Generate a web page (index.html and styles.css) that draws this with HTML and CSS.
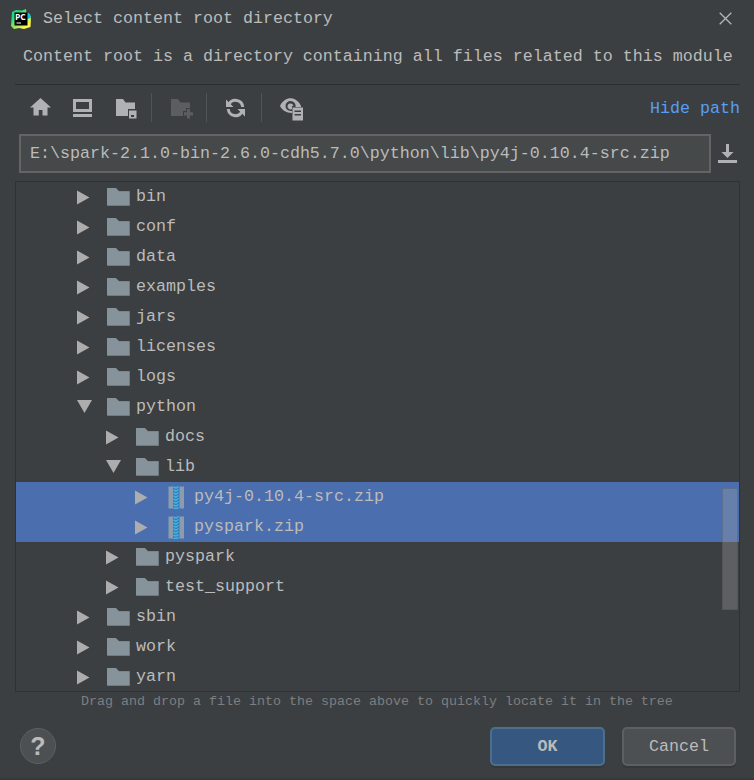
FILE: index.html
```
<!DOCTYPE html>
<html lang="en">
<head>
<meta charset="utf-8">
<title>Select content root directory</title>
<link rel="stylesheet" href="styles.css">
</head>
<body>
<svg class="defs" width="0" height="0">
  <defs>
    <linearGradient id="pc" x1="0" y1="0" x2="1" y2="1"><stop offset="0.25" stop-color="#21d789"/><stop offset="0.6" stop-color="#b5ea50"/><stop offset="0.8" stop-color="#fcf84a"/></linearGradient>
    <symbol id="folder" viewBox="0 0 23 18"><path d="M0.5 0.5H9L12 3.5H22.5V17.5H0.5Z" fill="#87939a" stroke="#6f7a81" stroke-width="1"/><path d="M0 0H8.7L11.7 3.5H22V17H0Z" fill="#87939a"/></symbol>
    <symbol id="right" viewBox="0 0 13 15"><path d="M0 0.5L12.5 7.5L0 14.5Z" fill="#adadad"/></symbol>
    <symbol id="down" viewBox="0 0 15 13"><path d="M0 0H15L7.5 13Z" fill="#adadad"/></symbol>
    <symbol id="zip" viewBox="0 0 17 23"><path d="M0.5 0.5H5V22.5H0.5ZM11.5 0.5H16V22.5H11.5Z" fill="#8d9cad"/><path d="M5 0H11V23H5Z" fill="#3b78b8"/><path d="M5.5 1L8 2.2L10.5 0.5M5.5 4L8 5.2L10.5 3.5M5.5 7L8 8.2L10.5 6.5M5.5 10L8 11.2L10.5 9.5M5.5 13L8 14.2L10.5 12.5M5.5 16L8 17.2L10.5 15.5M5.5 19L8 20.2L10.5 18.5M5.5 22L8 22.800L10.500 21.500" fill="none" stroke="#40b6e0" stroke-width="1.5"/></symbol>
  </defs>
</svg>
<main class="dialog">
  <header class="titlebar">
    <svg class="logo" width="20" height="20" viewBox="0 0 20 20"><path d="M1 3L5 1L11 1.5L15 0L15.500 4L18 4.500L20 8L19.500 18L13 20L8 19L3 20L0 17Z" fill="url(#pc)"/><path d="M16 4L19 5L20 9L16 10Z" fill="#07c3f2"/><path d="M3.500 3.500H16.500V16.500H3.500Z" fill="#000"/><path d="M5.500 14H10" stroke="#fff" stroke-width="1"/><text x="4" y="10.500" class="logo-text">PC</text></svg>
    <h1 class="title">Select content root directory</h1>
    <svg class="close" width="13" height="13" viewBox="0 0 13 13"><path d="M0.700 0.700L12.300 12.300M12.300 0.700L0.700 12.300" stroke="#b5b8ba" stroke-width="1.300"/></svg>
  </header>
  <p class="description">Content root is a directory containing all files related to this module</p>
  <nav class="toolbar">
    <svg width="21" height="18" viewBox="0 0 21 18"><path d="M10.500 0L21 9.500H17.500V17.500H12.500V12H8.800V17.500H3.500V9.500H0Z" fill="#afb1b3"/></svg>
    <svg class="desktop" width="19" height="18" viewBox="0 0 19 18"><path fill-rule="evenodd" d="M0 0H19V13H0ZM3 3V10H16V3ZM0 15H19V18H0Z" fill="#afb1b3"/></svg>
    <svg class="project" width="21" height="20" viewBox="0 0 21 20"><path d="M0 0H7L9.500 3.500H19V10H12V17H0Z" fill="#afb1b3"/><path fill-rule="evenodd" d="M13 11.500H20.500V19.500H13ZM15 16V18H18V16Z" fill="#afb1b3"/></svg>
    <i class="separator"></i>
    <svg class="newdir" width="23" height="20" viewBox="0 0 23 20"><path d="M0 0H7L9.500 3.500H19V9H15V12H12V17H0Z" fill="#5c5d5e"/><path d="M16 10H19V13.200H22V16.500H19V19.500H16V16.500H13V13.200H16Z" fill="#5c5d5e"/></svg>
    <i class="separator"></i>
    <svg class="refresh" width="20" height="20" viewBox="0 0 20 20"><path d="M4 6.500A7.200 7.200 0 0 1 17.700 9M17 13.500A7.200 7.200 0 0 1 3.300 11" fill="none" stroke="#afb1b3" stroke-width="3"/><path d="M1 1.500V9H8.500ZM20 18.500V11H12.500Z" fill="#afb1b3"/></svg>
    <i class="separator"></i>
    <svg class="hidden" width="24" height="23" viewBox="0 0 24 23"><path fill-rule="evenodd" d="M0 8C5-2.200 16-2.200 21 8V9H12V15C6 15 2 12 0 8ZM10.500 3A5 5 0 0 0 10.500 13H12V9H15.500A5 5 0 0 0 10.500 3Z" fill="#afb1b3"/><path d="M13.500 8H12V11A3 3 0 1 1 13.500 8Z" fill="#afb1b3"/><path fill-rule="evenodd" d="M12.500 9.500H23V22.500H12.500ZM14.500 12.500V14H21V12.500ZM14.500 16V17.500H21V16Z" fill="#afb1b3"/></svg>
    <a class="hide-path">Hide path</a>
  </nav>
  <div class="path-row">
    <div class="path-field">E:\spark-2.1.0-bin-2.6.0-cdh5.7.0\python\lib\py4j-0.10.4-src.zip</div>
    <svg width="19" height="19" viewBox="0 0 19 19"><path d="M8 0H11V8H15.500L9.500 14L3.500 8H8ZM0 16H19V19H0Z" fill="#afb1b3"/></svg>
  </div>
  <section class="tree">
    <div class="row"><svg class="arrow"><use href="#right"/></svg><svg class="folder"><use href="#folder"/></svg><span>bin</span></div>
    <div class="row"><svg class="arrow"><use href="#right"/></svg><svg class="folder"><use href="#folder"/></svg><span>conf</span></div>
    <div class="row"><svg class="arrow"><use href="#right"/></svg><svg class="folder"><use href="#folder"/></svg><span>data</span></div>
    <div class="row"><svg class="arrow"><use href="#right"/></svg><svg class="folder"><use href="#folder"/></svg><span>examples</span></div>
    <div class="row"><svg class="arrow"><use href="#right"/></svg><svg class="folder"><use href="#folder"/></svg><span>jars</span></div>
    <div class="row"><svg class="arrow"><use href="#right"/></svg><svg class="folder"><use href="#folder"/></svg><span>licenses</span></div>
    <div class="row"><svg class="arrow"><use href="#right"/></svg><svg class="folder"><use href="#folder"/></svg><span>logs</span></div>
    <div class="row"><svg class="arrow open"><use href="#down"/></svg><svg class="folder"><use href="#folder"/></svg><span>python</span></div>
    <div class="row level-2"><svg class="arrow"><use href="#right"/></svg><svg class="folder"><use href="#folder"/></svg><span>docs</span></div>
    <div class="row level-2"><svg class="arrow open"><use href="#down"/></svg><svg class="folder"><use href="#folder"/></svg><span>lib</span></div>
    <div class="row level-3 selected"><svg class="arrow"><use href="#right"/></svg><svg class="zip"><use href="#zip"/></svg><span>py4j-0.10.4-src.zip</span></div>
    <div class="row level-3 selected"><svg class="arrow"><use href="#right"/></svg><svg class="zip"><use href="#zip"/></svg><span>pyspark.zip</span></div>
    <div class="row level-2"><svg class="arrow"><use href="#right"/></svg><svg class="folder"><use href="#folder"/></svg><span>pyspark</span></div>
    <div class="row level-2"><svg class="arrow"><use href="#right"/></svg><svg class="folder"><use href="#folder"/></svg><span>test_support</span></div>
    <div class="row"><svg class="arrow"><use href="#right"/></svg><svg class="folder"><use href="#folder"/></svg><span>sbin</span></div>
    <div class="row"><svg class="arrow"><use href="#right"/></svg><svg class="folder"><use href="#folder"/></svg><span>work</span></div>
    <div class="row"><svg class="arrow"><use href="#right"/></svg><svg class="folder"><use href="#folder"/></svg><span>yarn</span></div>
    <div class="scrollbar"></div>
  </section>
  <p class="hint">Drag and drop a file into the space above to quickly locate it in the tree</p>
  <footer class="footer">
    <button class="help">?</button>
    <button class="button primary">OK</button>
    <button class="button">Cancel</button>
  </footer>
</main>
</body>
</html>
```
FILE: styles.css
```
* { box-sizing: border-box; }
body {
  margin: 0;
  background: #3c3f41;
  color: #bbbbbb;
  font: 16.664px/30px "Liberation Mono", monospace;
}
svg { display: block; flex: none; }
.defs { position: absolute; }
.dialog {
  display: flex;
  flex-direction: column;
  width: 754px;
  height: 780px;
  padding: 0 14px 0 15px;
  border-bottom: 2px solid #36383a;
  overflow: hidden;
}
.titlebar { display: flex; align-items: center; height: 37px; margin-left: -4px; }
.logo { margin-top: 1px; }
.logo-text { font: bold 8.500px "Open Sans", sans-serif; fill: #fff; }
.title { margin: 0 0 0 12px; font-size: inherit; font-weight: normal; }
.close { margin: 0 8.500px 0 auto; }
.description {
  height: 48px;
  margin: 0;
  padding: 5px 0 0 8px;
  border-bottom: 1px solid #2b2d2e;
  white-space: nowrap;
}
.toolbar { display: flex; align-items: flex-start; height: 49px; padding: 13px 0 0 15px; }
.desktop { margin: 1px 0 0 22px; }
.project { margin: 1px 0 0 24px; }
.separator { width: 1px; height: 29px; margin-top: -5px; background: #515456; }
.project + .separator { margin-left: 14px; }
.newdir { margin: 1px 12px 0 19px; }
.refresh { margin: 0 16px 0 18px; }
.hidden { margin: 0 0 0 18px; }
.hide-path { margin: -4px 0 0 auto; color: #589df6; }
.path-row { display: flex; align-items: center; gap: 7px; height: 39px; margin: 0 2px 0 4px; }
.path-field {
  width: 692px;
  height: 39px;
  padding: 3px 0 0 9px;
  border: 2px solid #646464;
  background: #45494a;
  white-space: nowrap;
}
.tree { position: relative; height: 511px; margin-top: 8px; border: 1px solid #2f3233; }
.row { display: flex; align-items: center; height: 30px; padding-left: 61px; }
.level-2 { padding-left: 90px; }
.level-3 { padding-left: 119px; }
.selected { background: #4b6eaf; }
.row span { margin-left: 6px; }
.arrow { width: 13px; height: 15px; margin: 1px 17px 0 0; }
.arrow.open { width: 15px; height: 13px; margin: 0 15px 2px 0; }
.folder { width: 23px; height: 18px; }
.zip { width: 17px; height: 23px; margin: 1px 3px 0 3px; }
.scrollbar {
  position: absolute;
  top: 306px;
  right: 1px;
  width: 16px;
  height: 122px;
  border: 1px solid rgba(60, 63, 65, 0.25);
  background: rgba(166, 166, 166, 0.32);
}
.hint {
  margin: 0;
  height: 35px;
  padding-left: 66px;
  font-size: 13.330px;
  line-height: 19px;
  color: #7c7e80;
  white-space: nowrap;
}
.footer { display: flex; align-items: center; height: 39px; padding: 0 4px 0 5px; }
.help, .button {
  padding: 0;
  border: 1px solid #5e6060;
  background: #4c5052;
  color: #bbbbbb;
  font: inherit;
}
.help {
  width: 36px;
  height: 36px;
  margin: 0 auto 2px 0;
  border-radius: 50%;
  font: bold 25px/34px "Liberation Sans", sans-serif;
}
.button {
  width: 114px;
  height: 39px;
  border-width: 2px;
  border-radius: 5px;
  box-shadow: 0 2px 1px rgba(0, 0, 0, 0.12);
}
.button.primary { width: 115px; margin-right: 17px; border-color: #4c708c; background: #365880; font-weight: bold; }
```
